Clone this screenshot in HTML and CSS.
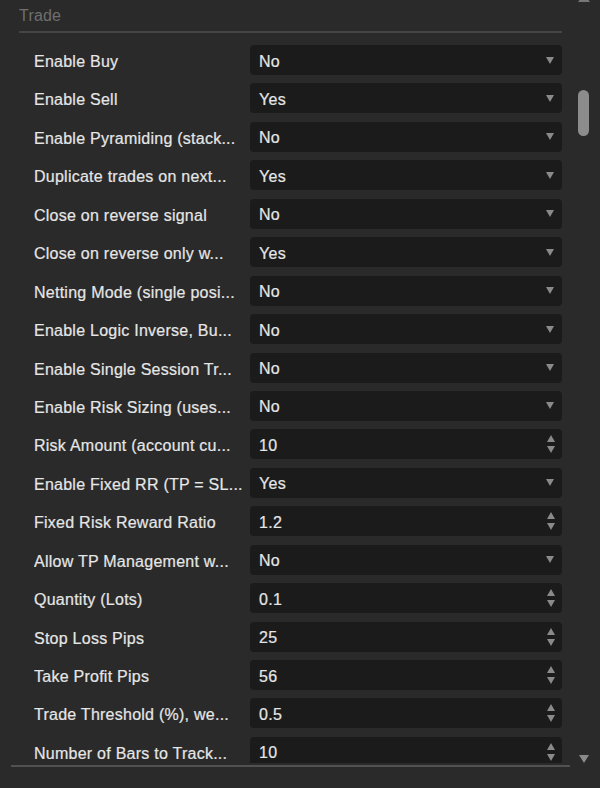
FILE: index.html
```html
<!DOCTYPE html>
<html lang="en">
<head>
    <meta charset="UTF-8">
    <meta name="viewport" content="width=device-width, initial-scale=1.0">
    <title>Trade Parameters</title>
    <link rel="stylesheet" href="styles.css">
</head>
<body>
    <div class="params-panel">
        <div class="params-scroll">
            <div class="params-content">
                <div class="group-title">Trade</div>

                <div class="param-list">
                    <div class="param-label">Enable Buy</div>
                    <div class="param-input select"><span class="value">No</span><span class="arrow-down"></span></div>

                    <div class="param-label">Enable Sell</div>
                    <div class="param-input select"><span class="value">Yes</span><span class="arrow-down"></span></div>

                    <div class="param-label">Enable Pyramiding (stack...</div>
                    <div class="param-input select"><span class="value">No</span><span class="arrow-down"></span></div>

                    <div class="param-label">Duplicate trades on next...</div>
                    <div class="param-input select"><span class="value">Yes</span><span class="arrow-down"></span></div>

                    <div class="param-label">Close on reverse signal</div>
                    <div class="param-input select"><span class="value">No</span><span class="arrow-down"></span></div>

                    <div class="param-label">Close on reverse only w...</div>
                    <div class="param-input select"><span class="value">Yes</span><span class="arrow-down"></span></div>

                    <div class="param-label">Netting Mode (single posi...</div>
                    <div class="param-input select"><span class="value">No</span><span class="arrow-down"></span></div>

                    <div class="param-label">Enable Logic Inverse, Bu...</div>
                    <div class="param-input select"><span class="value">No</span><span class="arrow-down"></span></div>

                    <div class="param-label">Enable Single Session Tr...</div>
                    <div class="param-input select"><span class="value">No</span><span class="arrow-down"></span></div>

                    <div class="param-label">Enable Risk Sizing (uses...</div>
                    <div class="param-input select"><span class="value">No</span><span class="arrow-down"></span></div>

                    <div class="param-label">Risk Amount (account cu...</div>
                    <div class="param-input number"><span class="value">10</span><span class="spin"><i class="up"></i><i class="down"></i></span></div>

                    <div class="param-label">Enable Fixed RR (TP = SL...</div>
                    <div class="param-input select"><span class="value">Yes</span><span class="arrow-down"></span></div>

                    <div class="param-label">Fixed Risk Reward Ratio</div>
                    <div class="param-input number"><span class="value">1.2</span><span class="spin"><i class="up"></i><i class="down"></i></span></div>

                    <div class="param-label">Allow TP Management w...</div>
                    <div class="param-input select"><span class="value">No</span><span class="arrow-down"></span></div>

                    <div class="param-label">Quantity (Lots)</div>
                    <div class="param-input number"><span class="value">0.1</span><span class="spin"><i class="up"></i><i class="down"></i></span></div>

                    <div class="param-label">Stop Loss Pips</div>
                    <div class="param-input number"><span class="value">25</span><span class="spin"><i class="up"></i><i class="down"></i></span></div>

                    <div class="param-label">Take Profit Pips</div>
                    <div class="param-input number"><span class="value">56</span><span class="spin"><i class="up"></i><i class="down"></i></span></div>

                    <div class="param-label">Trade Threshold (%), we...</div>
                    <div class="param-input number"><span class="value">0.5</span><span class="spin"><i class="up"></i><i class="down"></i></span></div>

                    <div class="param-label">Number of Bars to Track...</div>
                    <div class="param-input number"><span class="value">10</span><span class="spin"><i class="up"></i><i class="down"></i></span></div>
                </div>
            </div>

            <div class="scrollbar">
                <div class="scroll-up"></div>
                <div class="scroll-thumb"></div>
                <div class="scroll-down"></div>
            </div>
        </div>
        <div class="panel-footer-line"></div>
    </div>
</body>
</html>
```

FILE: styles.css
```css
body {
    margin: 0;
    background-color: #2a2a2a;
    font-family: "Liberation Sans", Arial, sans-serif;
    color: #e6e6e6;
}

.params-panel {
    width: 600px;
    height: 788px;
}

.params-scroll {
    display: flex;
    height: 763px;
    overflow: hidden;
}

.params-content {
    width: 578px;
    box-sizing: border-box;
    padding-right: 16px;
}

.group-title {
    margin-left: 19px;
    padding-top: 7px;
    height: 33px;
    box-sizing: border-box;
    border-bottom: 2px solid #444444;
    font-size: 16px;
    line-height: 18px;
    color: #6f6f6f;
    letter-spacing: 0.2px;
}

.param-list {
    display: grid;
    grid-template-columns: 216px 312px;
    grid-auto-rows: 30px;
    row-gap: 8.44px;
    padding-left: 34px;
    padding-top: 12px;
}

.param-label {
    font-size: 16px;
    line-height: 30px;
    padding-top: 2px;
    box-sizing: border-box;
    letter-spacing: 0.25px;
    white-space: nowrap;
    overflow: hidden;
    text-overflow: ellipsis;
    padding-right: 2px;
    -webkit-text-stroke: 0.2px #e6e6e6;
}

.param-input {
    display: flex;
    align-items: center;
    justify-content: space-between;
    background-color: #1b1b1b;
    border-radius: 4px;
    padding: 0 7px 0 9px;
    font-size: 16px;
    letter-spacing: 0.3px;
    -webkit-text-stroke: 0.2px #e6e6e6;
}

.value {
    padding-top: 3px;
}

.arrow-down {
    width: 0;
    height: 0;
    margin-right: 1px;
    border-left: 4px solid transparent;
    border-right: 4px solid transparent;
    border-top: 7px solid #8a8a8a;
}

.spin {
    display: flex;
    flex-direction: column;
    gap: 4px;
}

.spin i {
    display: block;
    width: 0;
    height: 0;
    border-left: 4.5px solid transparent;
    border-right: 4.5px solid transparent;
}

.spin .up {
    border-bottom: 7px solid #8a8a8a;
}

.spin .down {
    border-top: 7px solid #8a8a8a;
}

.scrollbar {
    position: relative;
    width: 22px;
}

.scroll-up {
    position: absolute;
    left: 0;
    top: -6px;
    width: 0;
    height: 0;
    border-left: 6px solid transparent;
    border-right: 6px solid transparent;
    border-bottom: 8px solid #777777;
}

.scroll-thumb {
    position: absolute;
    left: 0;
    top: 90px;
    width: 11px;
    height: 46px;
    border-radius: 6px;
    background-color: #8c8c8c;
}

.scroll-down {
    position: absolute;
    left: 1px;
    bottom: 0;
    width: 0;
    height: 0;
    border-left: 5.5px solid transparent;
    border-right: 5.5px solid transparent;
    border-top: 8px solid #8a8a8a;
}

.panel-footer-line {
    margin: 2px 0 0 11px;
    width: 559px;
    height: 2px;
    background-color: #515151;
}
```
